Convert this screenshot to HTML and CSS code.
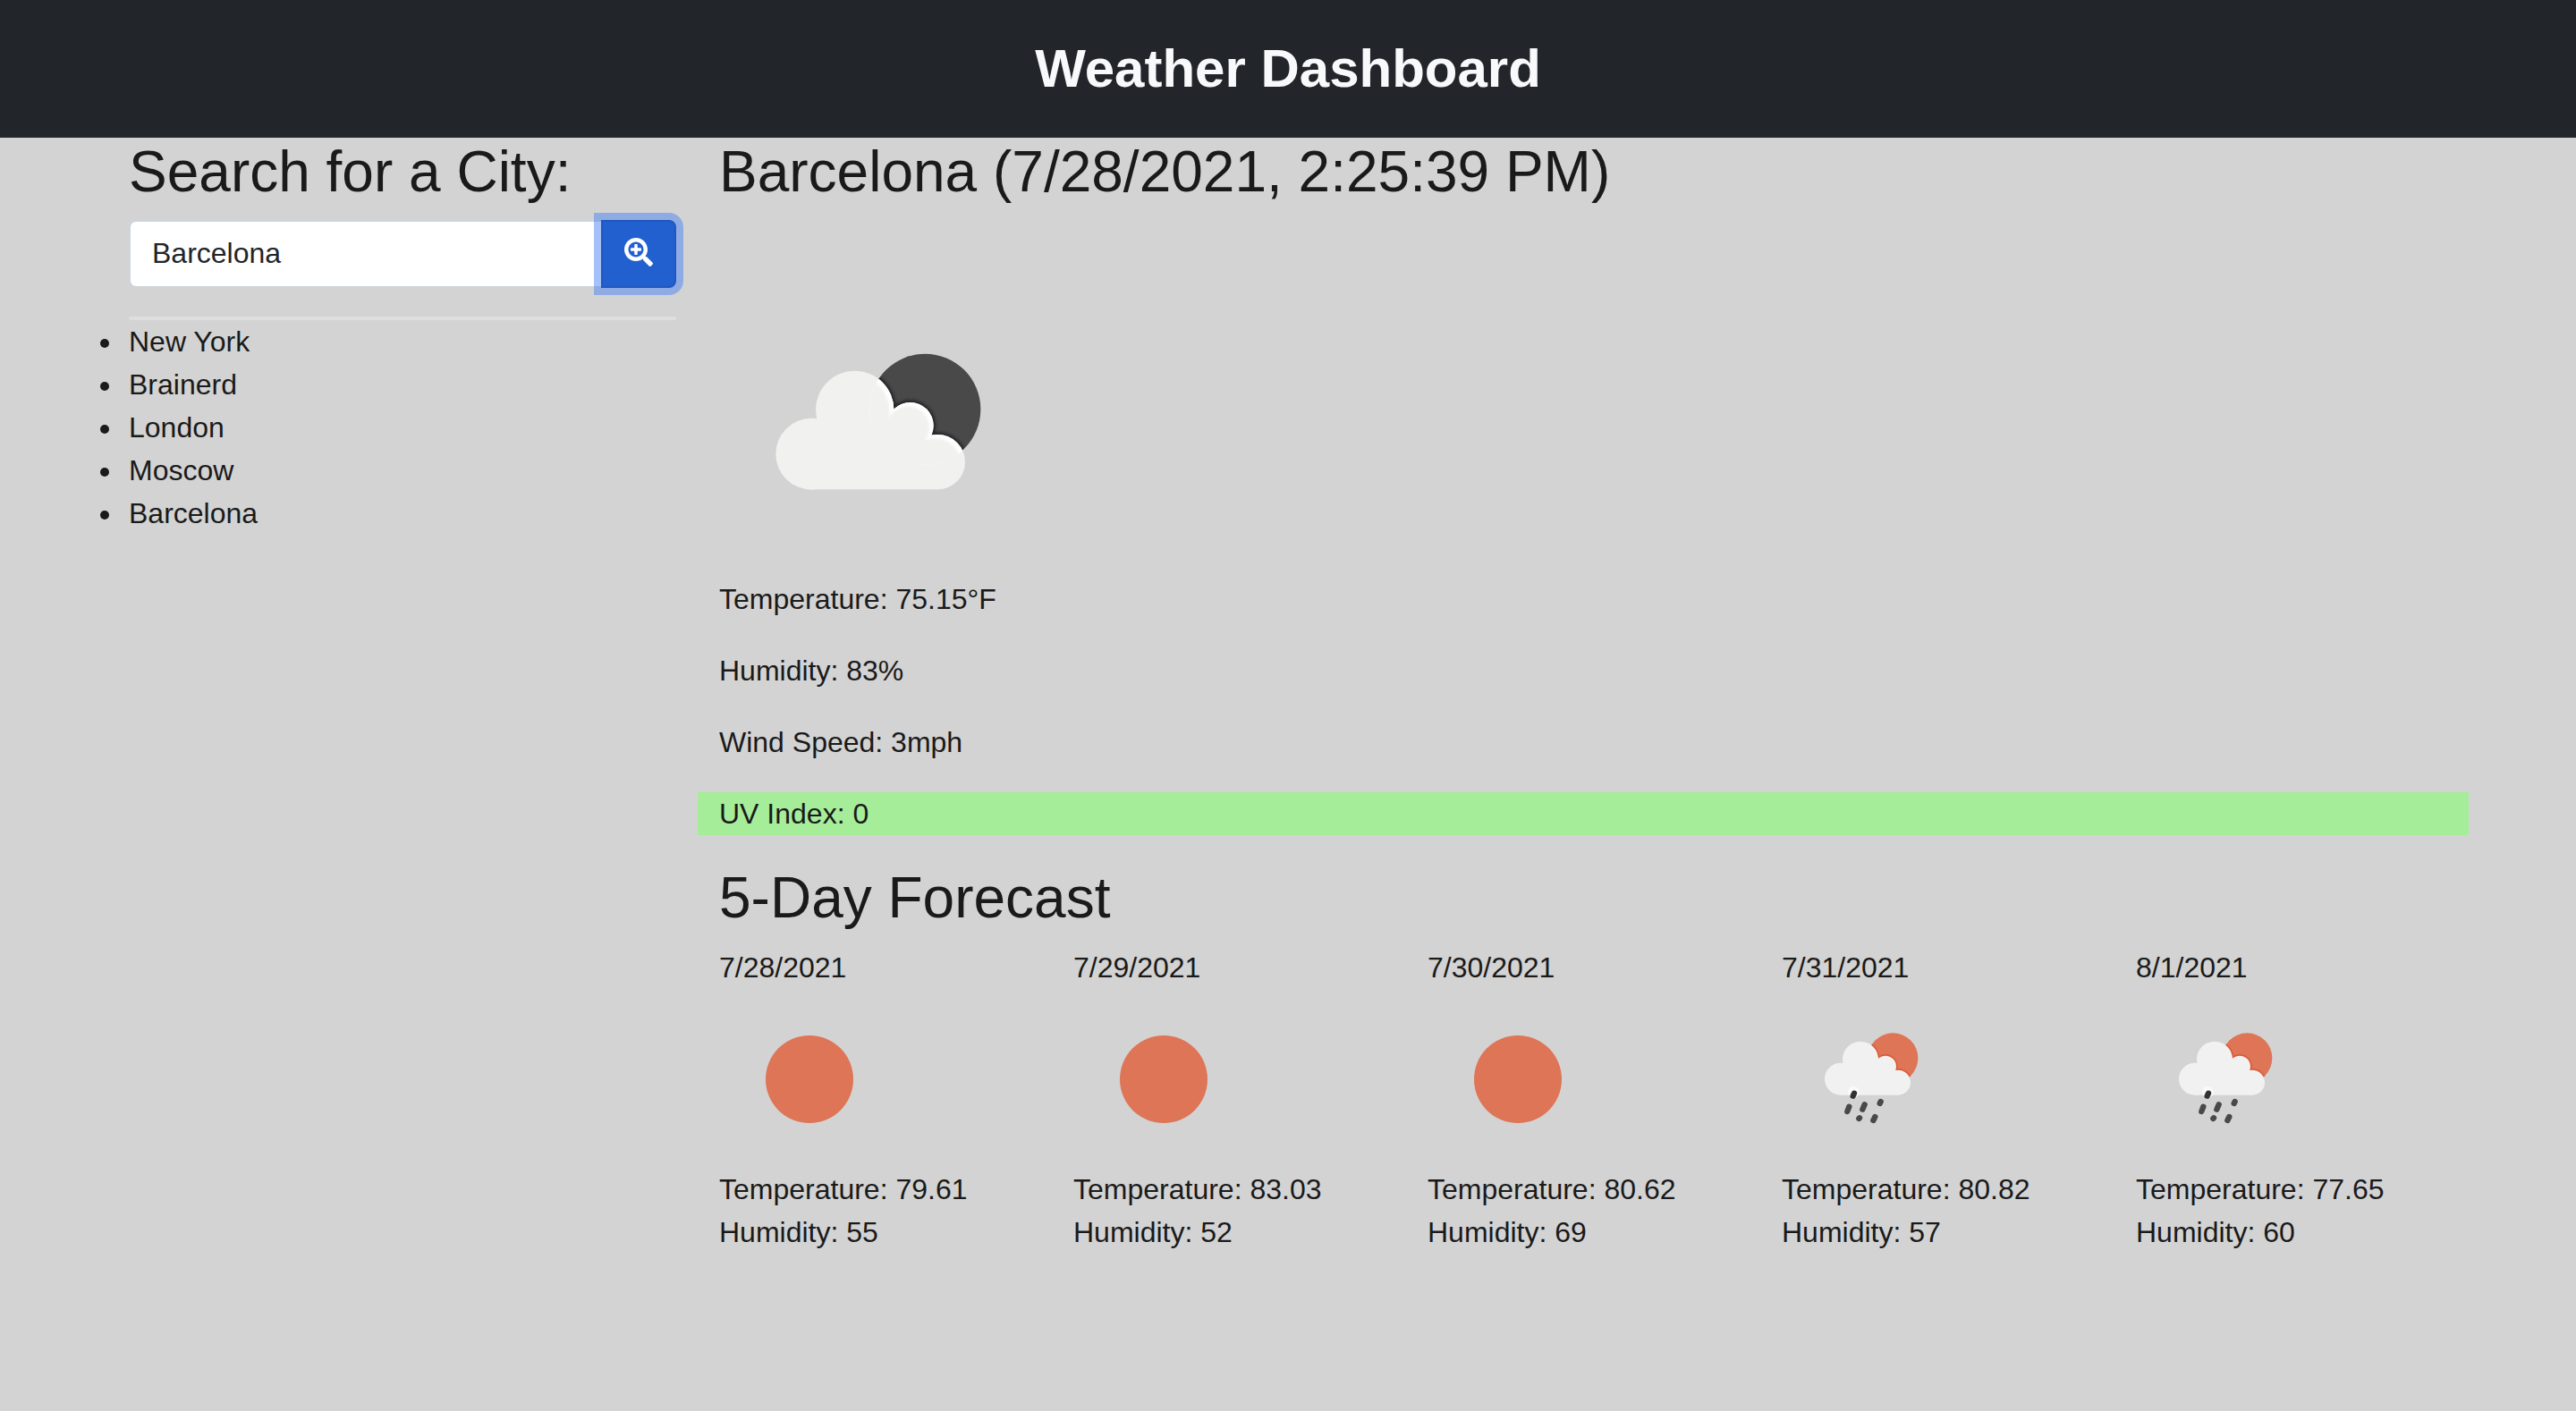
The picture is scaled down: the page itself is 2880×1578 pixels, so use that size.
FILE: index.html
```html
<!DOCTYPE html>
<html lang="en">
<head>
<meta charset="utf-8">
<meta name="viewport" content="width=device-width, initial-scale=1">
<title>Weather Dashboard</title>
<link rel="stylesheet" href="styles.css">
</head>
<body>
<svg class="sprite" aria-hidden="true">
  <defs>
    <clipPath id="moon-clip"><circle cx="643" cy="353" r="186"/></clipPath>
    <clipPath id="sun-clip"><circle cx="409" cy="190" r="84"/></clipPath>
    <filter id="soft"><feGaussianBlur stdDeviation="2"/></filter>
    <filter id="softer"><feGaussianBlur stdDeviation="4"/></filter>
    <symbol id="icon-clear" viewBox="0 0 200 200">
      <circle cx="101" cy="101" r="49" fill="#dd7556"/>
    </symbol>
    <symbol id="icon-rain" viewBox="36 -42 600 600">
      <g filter="url(#soft)">
      <circle cx="409" cy="190" r="84" fill="#dd7556"/>
      <g clip-path="url(#sun-clip)" fill="#dc5a38">
        <circle cx="300" cy="194" r="65"/><circle cx="384" cy="218" r="41"/><circle cx="426" cy="272" r="47"/>
      </g>
      <g fill="#f1f1f1">
        <circle cx="234" cy="260" r="54"/><circle cx="300" cy="194" r="60"/>
        <circle cx="384" cy="218" r="36"/><circle cx="426" cy="272" r="42"/>
        <path d="M234 236H330V205H384V240H400V272H426V314H234Z"/>
      </g>
      <circle cx="277" cy="304" r="19" fill="#fafafa"/>
      <g stroke="#48484a" stroke-width="19" stroke-linecap="round">
        <path stroke="#303032" d="M279 308L275 317"/>
        <path d="M262 353L256 369M314 346L307 362M368 336L365 342M297 391L295 393M349 387L343 399"/>
      </g>
      </g>
    </symbol>
    <symbol id="icon-clouds" viewBox="-48 -282 1200 1200">
      <g filter="url(#soft)">
      <circle cx="643" cy="353" r="186" fill="#48484a"/>
      <g clip-path="url(#moon-clip)">
        <g fill="#262628" filter="url(#softer)">
          <circle cx="407" cy="355" r="139"/><circle cx="593" cy="408" r="86"/><circle cx="685" cy="530" r="100"/>
        </g>
      </g>
      <g fill="#f1f1ef">
        <circle cx="262" cy="503" r="120"/><circle cx="407" cy="355" r="131"/>
        <circle cx="593" cy="408" r="78"/><circle cx="685" cy="530" r="92"/>
        <rect x="262" y="440" width="423" height="182"/>
      </g>
      <g clip-path="url(#moon-clip)">
        <g fill="#fff">
          <circle cx="407" cy="355" r="131"/><circle cx="593" cy="408" r="78"/><circle cx="685" cy="530" r="92"/>
        </g>
        <g fill="#f1f1ef" filter="url(#softer)">
          <circle cx="400" cy="361" r="124"/><circle cx="586" cy="414" r="71"/><circle cx="678" cy="536" r="85"/>
          <rect x="440" y="390" width="140" height="220"/><rect x="560" y="455" width="90" height="150"/>
        </g>
      </g>
      </g>
    </symbol>
  </defs>
</svg>

<header class="site-header">
  <h1 class="site-title">Weather Dashboard</h1>
</header>

<main class="container">
  <aside class="sidebar">
    <h2 class="heading"><label for="city">Search for a City:</label></h2>
    <form class="search">
      <input class="search-input" id="city" type="text" value="Barcelona">
      <button class="search-button" type="button" aria-label="Search">
        <svg class="search-icon" viewBox="0 0 512 512" aria-hidden="true"><path fill="currentColor" d="M304 192v32c0 6.600-5.400 12-12 12h-56v56c0 6.600-5.400 12-12 12h-32c-6.600 0-12-5.400-12-12v-56h-56c-6.600 0-12-5.400-12-12v-32c0-6.600 5.400-12 12-12h56v-56c0-6.600 5.400-12 12-12h32c6.600 0 12 5.400 12 12v56h56c6.600 0 12 5.400 12 12zm201 284.700L476.700 505c-9.400 9.400-24.600 9.400-33.900 0L343 405.300c-4.500-4.500-7-10.600-7-17V372c-35.300 27.600-79.700 44-128 44C93.100 416 0 322.900 0 208S93.100 0 208 0s208 93.100 208 208c0 48.300-16.400 92.700-44 128h16.300c6.400 0 12.500 2.500 17 7l99.700 99.700c9.300 9.400 9.300 24.600 0 34zM344 208c0-75.200-60.800-136-136-136S72 132.800 72 208s60.800 136 136 136 136-60.800 136-136z"/></svg>
      </button>
    </form>
    <hr class="divider">
    <ul class="history">
      <li>New York</li>
      <li>Brainerd</li>
      <li>London</li>
      <li>Moscow</li>
      <li>Barcelona</li>
    </ul>
  </aside>

  <div class="weather">
    <section class="current">
      <h2 class="heading">Barcelona (7/28/2021, 2:25:39 PM)</h2>
      <svg class="current-icon" role="img" aria-label="Broken clouds"><use href="#icon-clouds"/></svg>
      <p class="reading">Temperature: 75.15°F</p>
      <p class="reading">Humidity: 83%</p>
      <p class="reading">Wind Speed: 3mph</p>
      <p class="reading uv-low">UV Index: 0</p>
    </section>
    <section>
      <h2 class="heading">5-Day Forecast</h2>
      <div class="forecast">
        <article class="day">
          <div>7/28/2021</div>
          <svg class="day-icon" role="img" aria-label="Clear sky"><use href="#icon-clear"/></svg>
          <div>Temperature: 79.61</div>
          <div>Humidity: 55</div>
        </article>
        <article class="day">
          <div>7/29/2021</div>
          <svg class="day-icon" role="img" aria-label="Clear sky"><use href="#icon-clear"/></svg>
          <div>Temperature: 83.03</div>
          <div>Humidity: 52</div>
        </article>
        <article class="day">
          <div>7/30/2021</div>
          <svg class="day-icon" role="img" aria-label="Clear sky"><use href="#icon-clear"/></svg>
          <div>Temperature: 80.62</div>
          <div>Humidity: 69</div>
        </article>
        <article class="day">
          <div>7/31/2021</div>
          <svg class="day-icon" role="img" aria-label="Rain"><use href="#icon-rain"/></svg>
          <div>Temperature: 80.82</div>
          <div>Humidity: 57</div>
        </article>
        <article class="day">
          <div>8/1/2021</div>
          <svg class="day-icon" role="img" aria-label="Rain"><use href="#icon-rain"/></svg>
          <div>Temperature: 77.65</div>
          <div>Humidity: 60</div>
        </article>
      </div>
    </section>
  </div>
</main>
</body>
</html>
```
FILE: styles.css
```css
*,
*::before,
*::after {
  box-sizing: border-box;
}

body {
  margin: 0;
  background: #d3d3d3;
  color: #1a1a1a;
  font-family: "Liberation Sans", Arial, sans-serif;
  font-size: 32px;
  line-height: 48px;
}

.sprite {
  position: absolute;
  width: 0;
  height: 0;
}

.site-header {
  padding: 39px 24px;
  background: #22262b;
  color: #f8f9fa;
  text-align: center;
}

.site-title {
  margin: 0;
  font-size: 60px;
  line-height: 76px;
  font-weight: 700;
}

.container {
  display: grid;
  grid-template-columns: 1fr 3fr;
  max-width: 2640px;
  margin: 0 auto;
}

.sidebar {
  min-width: 0;
  padding: 0 24px;
}

.weather {
  min-width: 0;
}

.heading {
  margin: 0 0 16px;
  font-size: 64px;
  line-height: 76px;
  font-weight: 400;
}

.weather .heading {
  padding: 0 24px;
}

.search {
  display: flex;
}

.search-input {
  flex: 1;
  min-width: 0;
  height: 76px;
  padding: 10px 24px 12px;
  border: 2px solid #ced4da;
  border-right: 0;
  border-radius: 8px 0 0 8px;
  background: #fff;
  color: #212529;
  font: inherit;
}

.search-button {
  display: flex;
  align-items: center;
  justify-content: center;
  padding: 0 24px;
  border: 2px solid #2257c0;
  border-radius: 0 8px 8px 0;
  background: #2360cf;
  box-shadow: 0 0 0 8px rgba(74, 131, 246, 0.5);
  color: #fff;
}

.search-icon {
  display: block;
  width: 32px;
  height: 32px;
  margin-bottom: 4px;
}

.divider {
  height: 4px;
  margin: 32px 0 0;
  border: 0;
  border-radius: 2px;
  background: #dedede;
}

.history {
  margin: 0 0 0 -6px;
  padding: 0;
}

.history li {
  padding-left: 6px;
}

.current-icon {
  display: block;
  width: 400px;
  height: 400px;
  margin-left: 24px;
}

.reading {
  margin: 0 0 32px;
  padding: 0 24px;
}

.uv-low {
  background: #a6ed9a;
}

.forecast {
  display: grid;
  grid-template-columns: repeat(5, 1fr);
}

.day {
  padding: 0 24px;
}

.day-icon {
  display: block;
  width: 200px;
  height: 200px;
}
```
